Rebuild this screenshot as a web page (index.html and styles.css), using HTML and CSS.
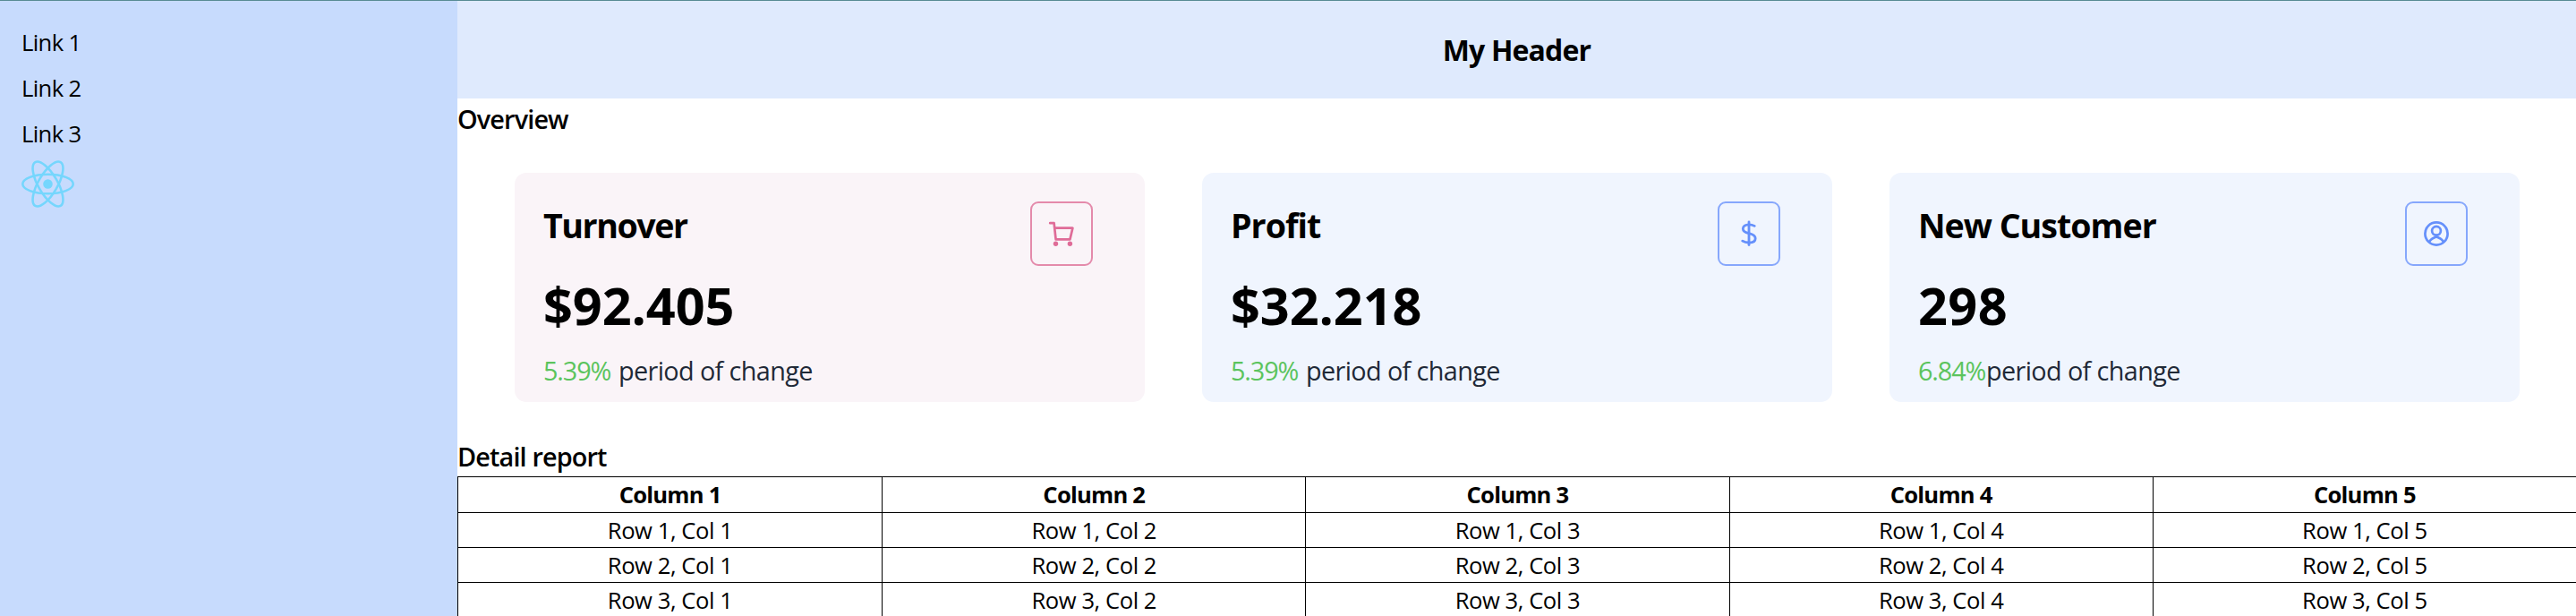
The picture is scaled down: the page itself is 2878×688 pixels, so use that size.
FILE: index.html
```html
<!DOCTYPE html>
<html lang="en">
<head>
<meta charset="utf-8">
<title>Dashboard</title>
<link rel="stylesheet" href="styles.css">
</head>
<body>
<div class="app">
  <aside class="sidebar">
    <a class="link">Link 1</a>
    <a class="link">Link 2</a>
    <a class="link">Link 3</a>
    <svg class="logo" viewBox="-11.5 -10.23 23 20.46">
      <circle r="2.05" fill="#75d6fd"/>
      <g fill="none" stroke="#75d6fd" stroke-width="1">
        <ellipse rx="11" ry="4.2"/>
        <ellipse rx="11" ry="4.2" transform="rotate(60)"/>
        <ellipse rx="11" ry="4.2" transform="rotate(120)"/>
      </g>
    </svg>
  </aside>
  <main class="main">
    <header class="header"><h1 class="header-title">My Header</h1></header>
    <h2 class="section-title">Overview</h2>
    <section class="cards">
      <article class="card pink">
        <div class="card-top">
          <h3 class="card-title turnover">Turnover</h3>
          <div class="icon-box">
            <svg class="icon" viewBox="0 0 32 32" fill="none" stroke="currentColor" stroke-width="2.7" stroke-linejoin="round" stroke-linecap="round">
              <path d="M3.2 4.2H7.6L9.6 22.4H25.4L28.4 9.7H8.2"/>
              <circle cx="9.5" cy="27.3" r="2.7" fill="currentColor" stroke="none"/>
              <circle cx="25.4" cy="27.3" r="2.7" fill="currentColor" stroke="none"/>
            </svg>
          </div>
        </div>
        <p class="value">$92.405</p>
        <p class="change"><span class="percent">5.39%</span><span class="period spaced">period of change</span></p>
      </article>
      <article class="card">
        <div class="card-top">
          <h3 class="card-title">Profit</h3>
          <div class="icon-box">
            <svg class="icon" viewBox="0 0 32 32" fill="none" stroke="currentColor" stroke-width="2.8" stroke-linecap="round">
              <path d="M16 3V28.6"/>
              <path d="M22.2 7.4C20.4 6.4 18.2 5.8 16 5.8C11.7 5.8 9.3 7.6 9.3 10.5C9.3 13.6 12 14.7 16 15.6C20.4 16.6 23.2 17.9 23.2 21.2C23.2 24.4 20.2 26 16 26C13.2 26 10.7 25.3 8.8 24.1"/>
            </svg>
          </div>
        </div>
        <p class="value">$32.218</p>
        <p class="change"><span class="percent">5.39%</span><span class="period spaced">period of change</span></p>
      </article>
      <article class="card">
        <div class="card-top">
          <h3 class="card-title">New Customer</h3>
          <div class="icon-box">
            <svg class="icon" viewBox="0 0 32 32" fill="none" stroke="currentColor" stroke-width="2.7" stroke-linecap="round">
              <circle cx="16" cy="16" r="12.6"/>
              <circle cx="16" cy="12.8" r="4.9"/>
              <path d="M16 17.8V19.4M8.2 25C9.2 22.2 12 21.3 16 19.2C20 21.3 22.8 22.2 23.8 25"/>
            </svg>
          </div>
        </div>
        <p class="value customers">298</p>
        <p class="change"><span class="percent">6.84%</span><span class="period">period of change</span></p>
      </article>
    </section>
    <h2 class="section-title">Detail report</h2>
    <table class="report">
      <thead>
        <tr><th>Column 1</th><th>Column 2</th><th>Column 3</th><th>Column 4</th><th>Column 5</th></tr>
      </thead>
      <tbody>
        <tr><td>Row 1, Col 1</td><td>Row 1, Col 2</td><td>Row 1, Col 3</td><td>Row 1, Col 4</td><td>Row 1, Col 5</td></tr>
        <tr><td>Row 2, Col 1</td><td>Row 2, Col 2</td><td>Row 2, Col 3</td><td>Row 2, Col 4</td><td>Row 2, Col 5</td></tr>
        <tr><td>Row 3, Col 1</td><td>Row 3, Col 2</td><td>Row 3, Col 3</td><td>Row 3, Col 4</td><td>Row 3, Col 5</td></tr>
      </tbody>
    </table>
  </main>
</div>
</body>
</html>
```

FILE: styles.css
```css
* { box-sizing: border-box; margin: 0; padding: 0; }

body {
  font-family: "Open Sans", "Noto Sans", sans-serif;
  font-size: 25.6px;
  color: #000;
  background: #fff;
  overflow: hidden;
}

.app {
  display: flex;
  height: 688px;
  border-top: 1px solid #588b93;
  overflow: hidden;
}

.sidebar {
  display: flex;
  flex-direction: column;
  flex: none;
  width: 511px;
  padding: 21px 24px;
  background: #c7dbfd;
}

.link { line-height: 51px; letter-spacing: -0.62px; white-space: nowrap; }

.logo { width: 59px; height: 53px; margin-top: 4px; }

.main { flex: 1; min-width: 0; }

.header {
  display: flex;
  align-items: center;
  justify-content: center;
  height: 109px;
  background: #dfeafd;
}

.header-title { padding-top: 1px; font-size: 32px; line-height: 44px; font-weight: 700; letter-spacing: -0.86px; }

.section-title { padding-top: 1px; font-size: 28.8px; line-height: 44px; font-weight: 600; letter-spacing: -0.85px; }

.cards {
  display: grid;
  grid-template-columns: repeat(3, 704px);
  column-gap: 64px;
  padding: 38px 0 38px 64px;
}

.card {
  height: 256px;
  padding: 32px 58px 0 32px;
  border-radius: 13px;
  background: #f0f5fe;
}

.card.pink { background: #faf4f8; }

.card-top { display: flex; justify-content: space-between; height: 84px; }

.card-title {
  padding-top: 1px;
  font-size: 37.6px;
  line-height: 52px;
  font-weight: 700;
  letter-spacing: -1px;
}

.card-title.turnover { letter-spacing: -1.45px; }

.icon-box {
  display: flex;
  align-items: center;
  justify-content: center;
  width: 70px;
  height: 72px;
  border: 2px solid #86a7fc;
  border-radius: 9px;
  color: #6590fb;
}

.pink .icon-box { border-color: #e48aab; color: #df6c98; }

.icon { width: 32px; height: 32px; }

.value { font-size: 57.6px; line-height: 64px; font-weight: 700; letter-spacing: -0.1px; }

.value.customers { letter-spacing: 0.4px; }

.change { display: flex; margin-top: 18px; font-size: 28.8px; line-height: 45px; color: #1f2937; white-space: nowrap; }

.percent { width: 75px; color: #5bc45d; letter-spacing: -1.1px; }

.period { letter-spacing: -0.62px; margin-left: 1px; }

.period.spaced { margin-left: 9px; }

.report {
  width: 100%;
  table-layout: fixed;
  border-collapse: separate;
  border-spacing: 0;
  border-left: 1px solid #000;
}

.report th, .report td {
  height: 39px;
  padding-top: 2px;
  line-height: 36px;
  text-align: center;
  letter-spacing: -0.44px;
  border-top: 1px solid #000;
}

.report th { height: 40px; padding-top: 1px; line-height: 38px; font-weight: 700; letter-spacing: -0.77px; }

.report th + th, .report td + td { border-left: 1px solid #000; }
```
